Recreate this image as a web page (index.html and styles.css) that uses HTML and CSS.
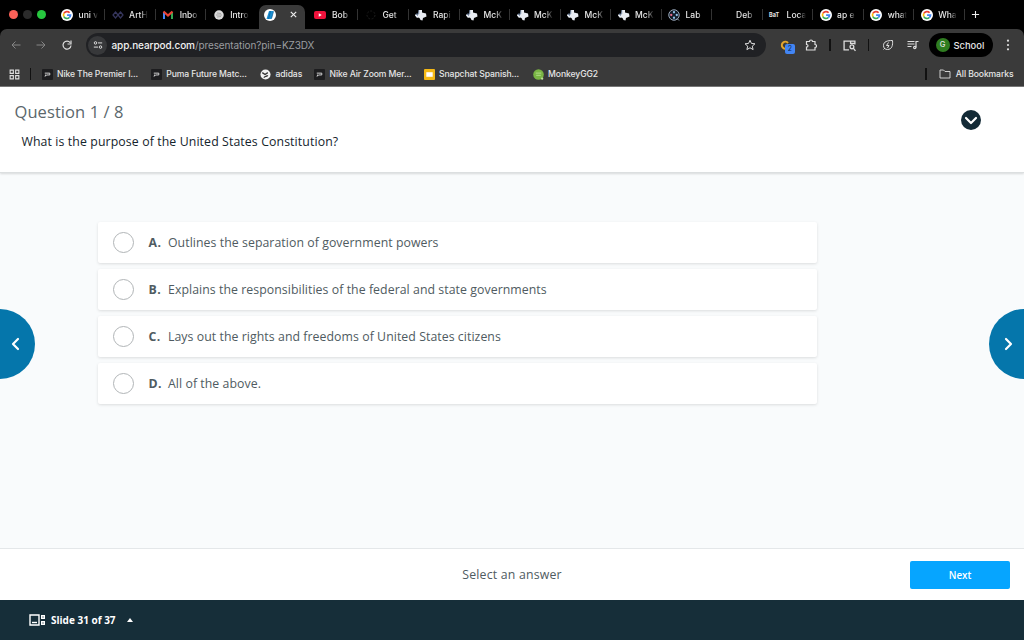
FILE: index.html
```html
<!DOCTYPE html>
<html lang="en">
<head>
<meta charset="utf-8">
<title>Nearpod</title>
<link rel="stylesheet" href="styles.css">
</head>
<body>

<svg class="defs" width="0" height="0">
  <symbol id="google" viewBox="0 0 24 24">
    <circle cx="12" cy="12" r="12" fill="#fff"/>
    <g fill="none" stroke-width="3.4">
      <path d="M17.2 7.4A7 7 0 0 0 5.8 8.8" stroke="#ea4335"/>
      <path d="M5.8 8.8a7 7 0 0 0 0 6.4" stroke="#fbbc05"/>
      <path d="M5.8 15.2a7 7 0 0 0 10.6 2.2" stroke="#34a853"/>
      <path d="M16.4 17.4A7 7 0 0 0 19 12.4h-6.8" stroke="#4285f4"/>
    </g>
  </symbol>
  <symbol id="texas" viewBox="0 0 24 24">
    <path d="M8 2h6v5l8 2 1 6-7 3-1 5-4-1-2-4-3-1-2 1-4-5v-2h6z" fill="#e8ecf2"/>
    <path d="M7.500 2v8H2l4 4" fill="none" stroke="#6f86a8" stroke-width="1.500"/>
  </symbol>
  <symbol id="shop" viewBox="0 0 24 24">
    <rect width="24" height="24" rx="2" fill="#1d1d1f"/>
    <path d="M6 9h11v4h-7l-3 3 1-4" fill="none" stroke="#ddd" stroke-width="2"/>
  </symbol>
</svg>

<div class="browser">
  <div class="tabstrip">
    <div class="lights"><i class="red"></i><i class="dim"></i><i class="green"></i></div>
    <div class="tab"><svg class="fav"><use href="#google"/></svg><span>uni v</span></div>
    <div class="tab"><svg class="fav" viewBox="0 0 24 24"><g fill="none" stroke="#35355c" stroke-width="2.5"><path d="M7 6l5 6-5 6-5-6zM17 6l5 6-5 6-5-6z"/></g></svg><span>ArtH</span></div>
    <div class="tab"><svg class="fav" viewBox="0 0 24 24"><path d="M4 20V6" stroke="#4285f4" stroke-width="4"/><path d="M20 20V6" stroke="#34a853" stroke-width="4"/><path d="M3 5l9 8 9-8" fill="none" stroke="#ea4335" stroke-width="4.5"/></svg><span>Inbo</span></div>
    <div class="tab last"><svg class="fav" viewBox="0 0 24 24"><circle cx="12" cy="12" r="9.5" fill="#dcdcdc"/><path d="M6 12h12M8 8l8 1M8 16l8-1" stroke="#999" stroke-width="1.6"/></svg><span>Intro</span></div>
    <div class="tab active"><svg class="fav" viewBox="0 0 24 24"><circle cx="12" cy="12" r="12" fill="#fff"/><path d="M10 4h9l-4 16H5z" fill="#1b8fd0"/><path d="M13 4L9 20M19 5l-4 14" stroke="#0b5f9c" stroke-width="1.5"/></svg><svg class="x" viewBox="0 0 10 10"><path d="M2 2l6 6M8 2l-6 6"/></svg></div>
    <div class="tab"><svg class="fav" viewBox="0 0 24 24"><rect y="4" width="24" height="16" rx="4" fill="#f0123c"/><path d="M9.500 8.500v7l6-3.500z" fill="#fff"/></svg><span>Bob</span></div>
    <div class="tab"><svg class="fav" viewBox="0 0 24 24"><circle cx="12" cy="12" r="8" fill="none" stroke="#1d1d1d" stroke-width="2" stroke-dasharray="4 3"/></svg><span>Get</span></div>
    <div class="tab"><svg class="fav"><use href="#texas"/></svg><span>Rapi</span></div>
    <div class="tab"><svg class="fav"><use href="#texas"/></svg><span>McK</span></div>
    <div class="tab"><svg class="fav"><use href="#texas"/></svg><span>McK</span></div>
    <div class="tab"><svg class="fav"><use href="#texas"/></svg><span>McK</span></div>
    <div class="tab"><svg class="fav"><use href="#texas"/></svg><span>McK</span></div>
    <div class="tab"><svg class="fav" viewBox="0 0 24 24"><circle cx="12" cy="12" r="10.500" fill="#111a26" stroke="#9aa9bb" stroke-width="2"/><g fill="#8fc1e8"><circle cx="12" cy="6.500" r="2.300"/><circle cx="17.500" cy="12" r="2.300"/><circle cx="12" cy="17.500" r="2.300"/></g><circle cx="6.500" cy="12" r="2.300" fill="#e36c8d"/><path d="M18 19l4 4" stroke="#9aa9bb" stroke-width="2"/></svg><span>Lab</span></div>
    <div class="tab"><svg class="fav"></svg><span>Deb</span></div>
    <div class="tab"><b class="fav baf">BaT</b><span>Loca</span></div>
    <div class="tab"><svg class="fav"><use href="#google"/></svg><span>ap e</span></div>
    <div class="tab"><svg class="fav"><use href="#google"/></svg><span>what</span></div>
    <div class="tab"><svg class="fav"><use href="#google"/></svg><span>Wha</span></div>
    <svg class="plus" viewBox="0 0 10 10"><path d="M5 1v8M1 5h8"/></svg>
  </div>

  <div class="toolbar">
    <div class="nav">
      <svg class="ico off" viewBox="0 0 24 24"><path d="M21 12H4M11 5l-7 7 7 7"/></svg>
      <svg class="ico off" viewBox="0 0 24 24"><path d="M3 12h17M13 5l7 7-7 7"/></svg>
      <svg class="ico reload" viewBox="0 0 24 24"><path d="M18.500 7.500A8 8 0 1 0 20 13"/><path d="M20 3v7h-7"/></svg>
    </div>
    <div class="omnibox">
      <div class="site"><svg class="ico" viewBox="0 0 24 24"><circle cx="6" cy="7" r="3"/><path d="M12 7h10M2 17h10"/><circle cx="18" cy="17" r="3"/></svg></div>
      <div class="url"><b>app.nearpod.com</b>/presentation?pin=KZ3DX</div>
      <svg class="ico star" viewBox="0 0 24 24"><path d="M12 2.500l2.900 6.400 7 .7-5.300 4.700 1.600 6.900-6.200-3.700-6.200 3.700 1.600-6.900L2.100 9.600l7-.7z"/></svg>
    </div>
    <div class="tools">
      <div class="ext"><svg viewBox="0 0 24 24"><path d="M18 8a7 7 0 1 0-1 10" fill="none" stroke="#e3a72f" stroke-width="4"/></svg><em>2</em></div>
      <svg class="ico puzzle" viewBox="0 0 24 24"><path d="M3 5h6c0-4 6-4 6 0h5v6c4 0 4 6 0 6v5H3v-6c4 0 4-5 0-5z"/></svg>
      <i class="bar"></i>
      <svg class="ico lens" viewBox="0 0 24 24"><path d="M11 20H2V4h20v6M14 4v4h8"/><circle cx="16.500" cy="14.500" r="3.500"/><path d="M19 17l4 5"/></svg>
      <i class="bar"></i>
      <svg class="ico leaf" viewBox="0 0 24 24"><path d="M21 3c1 9-1 18-10 18-5 0-8-3-8-8C3 5 11 3 21 3zM3 21l3-3M13 7l-4 6h5l-3 5"/></svg>
      <svg class="ico media" viewBox="0 0 24 24"><path d="M1 5h14M1 10h14M1 15h8M18 17V5h5"/><circle cx="15.500" cy="17" r="2.300"/></svg>
      <div class="profile"><i>G</i>School</div>
      <svg class="dots" viewBox="0 0 4 14"><circle cx="2" cy="2" r="1.300"/><circle cx="2" cy="7" r="1.300"/><circle cx="2" cy="12" r="1.300"/></svg>
    </div>
  </div>

  <div class="bookmarks">
    <svg class="ico apps" viewBox="0 0 24 24"><path d="M2.500 2.500h7v7h-7zM14.500 2.500h7v7h-7zM2.500 14.500h7v7h-7zM14.500 14.500h7v7h-7z"/></svg>
    <i class="bar"></i>
    <div class="bm b1"><svg><use href="#shop"/></svg><span>Nike The Premier I...</span></div>
    <div class="bm b2"><svg><use href="#shop"/></svg><span>Puma Future Matc...</span></div>
    <div class="bm b3"><svg viewBox="0 0 24 24"><circle cx="12" cy="12" r="11" fill="#f2f2f2"/><path d="M5 8l6 4 6-4M9 19c0-4 6-2 8-5" fill="none" stroke="#333" stroke-width="3"/></svg><span>adidas</span></div>
    <div class="bm b4"><svg><use href="#shop"/></svg><span>Nike Air Zoom Mer...</span></div>
    <div class="bm b5"><svg viewBox="0 0 24 24"><rect width="24" height="24" rx="2" fill="#f4b816"/><rect x="5" y="7" width="14" height="10" fill="#fff"/></svg><span>Snapchat Spanish...</span></div>
    <div class="bm b6"><svg viewBox="0 0 24 24"><circle cx="12" cy="12" r="11.500" fill="#79b544"/><path d="M6 9h12M7 14h10" stroke="#a5d47a" stroke-width="2.500"/><circle cx="20" cy="21" r="2.500" fill="#c0e69a"/></svg><span>MonkeyGG2</span></div>
    <div class="all"><i class="bar"></i><svg class="ico" viewBox="0 0 24 24"><path d="M2 4h7l3 3h10v13H2z"/></svg><span>All Bookmarks</span></div>
  </div>
</div>

<div class="question">
  <div>
    <h1>Question 1 / 8</h1>
    <p>What is the purpose of the United States Constitution?</p>
  </div>
  <svg class="collapse" viewBox="0 0 20 20"><circle cx="10" cy="10" r="10"/><path d="M5 8l5 5 5-5"/></svg>
</div>

<div class="stage">
  <div class="arrow prev"><svg viewBox="0 0 10 14"><path d="M8 2L3 7l5 5"/></svg></div>
  <div class="answers">
    <label class="answer"><i></i><b>A.</b><span>Outlines the separation of government powers</span></label>
    <label class="answer"><i></i><b>B.</b><span>Explains the responsibilities of the federal and state governments</span></label>
    <label class="answer"><i></i><b>C.</b><span>Lays out the rights and freedoms of United States citizens</span></label>
    <label class="answer"><i></i><b>D.</b><span>All of the above.</span></label>
  </div>
  <div class="arrow next"><svg viewBox="0 0 10 14"><path d="M2 2l5 5-5 5"/></svg></div>
</div>

<div class="submit">
  <span class="hint">Select an answer</span>
  <button>Next</button>
</div>

<div class="slides">
  <svg class="deck" viewBox="0 0 17 12"><path d="M1 1h9v10H1z"/><path d="M3 8.500h5"/><path d="M12.700 1.700h2.600v2.600h-2.600zM12.700 7.700h2.600v2.600h-2.600z"/></svg>
  <span>Slide 31 of 37</span>
  <i class="caret"></i>
</div>

</body>
</html>
```
FILE: styles.css
```css
* { box-sizing: border-box; }
body { margin: 0; width: 1024px; height: 640px; overflow: hidden; display: flex; flex-direction: column;
  font-family: "Open Sans", "Noto Sans", sans-serif; color: #4f5b61; background: #f9fbfc; }
svg { display: block; flex: none; }
i, em { font-style: normal; }
.defs { position: absolute; }

/* browser */
.browser { height: 87px; flex: none; background: #000; border-bottom: 1px solid #777;
  font-family: Inter, "Liberation Sans", sans-serif; color: #e6e6e6; }
.tabstrip { height: 29px; display: flex; align-items: center; }
.lights { width: 54.6px; padding-left: 9px; display: flex; gap: 5px; flex: none; }
.lights i { width: 9px; height: 9px; border-radius: 50%; }
.red { background: #fb6158; }
.dim { background: #2b2b2b; }
.green { background: #27c73f; }
.tab { width: 50.52px; height: 29px; flex: none; display: flex; align-items: center; padding-left: 6.5px;
  font-size: 8.5px; font-weight: 500; position: relative; }
.tab:after { content: ""; position: absolute; right: 0; top: 9px; width: 1px; height: 11px; background: #333; }
.tab.last:after, .tab.active:after { display: none; }
.fav { width: 12px; height: 12px; flex: none; }
.tab span { margin-left: 5.5px; width: 19px; overflow: hidden; white-space: nowrap;
  -webkit-mask-image: linear-gradient(90deg, #000 60%, transparent); mask-image: linear-gradient(90deg, #000 60%, transparent); }
.baf { font-size: 5.5px; line-height: 12px; }
.tab.active { height: 24px; width: 46px; margin: 5px 3px 0 2.3px; padding: 0 7px 5px 5px; justify-content: space-between;
  background: #3a3a3a; border-radius: 7px 7px 0 0; }
.x { width: 9px; height: 9px; fill: none; stroke: #eee; stroke-width: 1.3; }
.plus { width: 9px; height: 9px; margin-left: 6.5px; fill: none; stroke: #eee; stroke-width: 1.2; }

.toolbar { height: 33px; padding-bottom: 1px; display: flex; align-items: center; background: #3a3a3a; border-radius: 7px 7px 0 0; }
.ico { width: 12px; height: 12px; fill: none; stroke: #dedede; stroke-width: 2.4; }
.off { stroke: #858585; stroke-width: 2; }
.nav { width: 86px; padding-left: 9.5px; display: flex; gap: 13.5px; flex: none; }
.omnibox { width: 680px; height: 24px; flex: none; border-radius: 12px; background: #202124;
  display: flex; align-items: center; padding: 0 10.5px 0 2px; }
.site { width: 19px; height: 19px; border-radius: 50%; background: #37383a; display: flex; align-items: center; justify-content: center; }
.site .ico { width: 10px; height: 10px; }
.url { flex: 1; margin-left: 4.5px; font-size: 10px; letter-spacing: -.1px; color: #9b9da0; }
.url b { font-weight: 500; color: #f1f1f1; }
.star { stroke-width: 2; }
.tools { display: flex; align-items: center; flex: 1; }
.ext { width: 17px; height: 16px; margin-left: 13px; position: relative; }
.ext svg { width: 12px; height: 12px; margin-top: 2px; }
.ext em { position: absolute; left: 6px; top: 7px; width: 10px; height: 10px; border-radius: 2px; background: #4285f4;
  color: #10284f; font-size: 7px; line-height: 10px; text-align: center; }
.puzzle { margin-left: 9px; }
.bar { width: 1.5px; height: 12px; background: #111; flex: none; }
.puzzle + .bar { margin-left: 12px; }
.lens { width: 13px; height: 13px; margin: 0 12px 0 12px; }
.leaf { margin-left: 12.5px; stroke-width: 2; }
.media { margin-left: 13px; }
.profile { width: 64px; height: 24px; margin-left: 10px; border-radius: 12px; background: #000; display: flex; align-items: center;
  padding-left: 7px; font-size: 9.4px; font-weight: 500; }
.profile i { width: 14px; height: 14px; margin-right: 4px; border-radius: 50%; background: #2f7d20; font-size: 7.5px; line-height: 14px; text-align: center; }
.dots { width: 4px; height: 12px; margin-left: 13px; fill: #dedede; }

.bookmarks { height: 24px; display: flex; align-items: center; background: #3a3a3a; font-size: 8.6px; font-weight: 500;
  letter-spacing: -.1px; }
.apps { width: 11px; height: 11px; margin: 0 9.5px 0 9px; }
.bm { display: flex; align-items: center; }
.bm svg { width: 11px; height: 11px; margin-right: 4.5px; }
.bm span, .all span { white-space: nowrap; }
.b1 { margin-left: 10.5px; width: 109.3px; }
.b2 { width: 109.3px; }
.b3 { width: 54px; }
.b4 { width: 109.5px; }
.b5 { width: 109px; }
.all { margin-left: auto; margin-right: 10.5px; display: flex; align-items: center; }
.all .ico { margin: 0 5px 0 12px; stroke-width: 1.8; }

/* question */
.question { height: 86px; flex: none; padding: 13px 43px 0 14.5px; display: flex; justify-content: space-between;
  background: #fff; border-bottom: 1px solid #dcdfe0; box-shadow: 0 1px 2px #0002; }
h1 { margin: 0; font-size: 16.5px; line-height: 24px; font-weight: 500; letter-spacing: .08px; color: #5b676c; }
.question p { margin: 9px 0 0 7px; font-size: 12.3px; line-height: 18px; font-weight: 500; letter-spacing: .11px; color: #14242c; }
.collapse { width: 20px; height: 20px; margin-top: 9.5px; fill: #132a36; }
.collapse path { fill: none; stroke: #fff; stroke-width: 2.2; stroke-linecap: round; stroke-linejoin: round; }

.stage { flex: 1; display: flex; justify-content: space-between; }
.answers { width: 719px; margin: 48.5px 0 0; display: flex; flex-direction: column; gap: 6px; }
.answer { height: 41px; display: flex; align-items: center; padding-left: 15px; background: #fff;
  border-radius: 2px; box-shadow: 0 1px 3px #0000001f; font-size: 12.3px; font-weight: 500; letter-spacing: .06px; white-space: nowrap; }
.answer i { width: 21px; height: 21px; border: 1.5px solid #b1b5b7; border-radius: 50%; margin-right: 15px; }
.answer b { width: 19.5px; font-weight: 700; letter-spacing: .4px; }
.arrow { width: 35px; height: 70px; margin-top: 136px; background: #0576ab; display: flex; align-items: center; }
.arrow svg { width: 10px; height: 14px; fill: none; stroke: #fff; stroke-width: 2.2; stroke-linecap: round; stroke-linejoin: round; }
.prev { border-radius: 0 35px 35px 0; padding-left: 9.5px; margin-right: 62.5px; }
.next { border-radius: 35px 0 0 35px; padding-left: 15px; margin-left: auto; }

.submit { height: 52px; flex: none; display: grid; grid-template-columns: 1fr auto 1fr; align-items: center;
  padding: 0 14px; background: #fff; border-top: 1px solid #e4e7e9; }
.hint { grid-column: 2; font-size: 12.3px; font-weight: 500; letter-spacing: .2px; }
.submit button { justify-self: end; width: 100px; height: 28px; border: 0; border-radius: 2px; background: #06a5ff; color: #fff;
  font: 600 9.8px "Open Sans", sans-serif; padding-top: 3px; }

.slides { height: 40px; flex: none; display: flex; align-items: center; padding-left: 29px; background: #162e39;
  color: #fff; font-size: 10px; font-weight: 700; }
.deck { width: 17px; height: 12px; margin-right: 5px; fill: none; stroke: #fff; stroke-width: 1.4; }
.caret { margin-left: 11px; border: 3.5px solid transparent; border-top: 0; border-bottom: 4px solid #fff; }
```
